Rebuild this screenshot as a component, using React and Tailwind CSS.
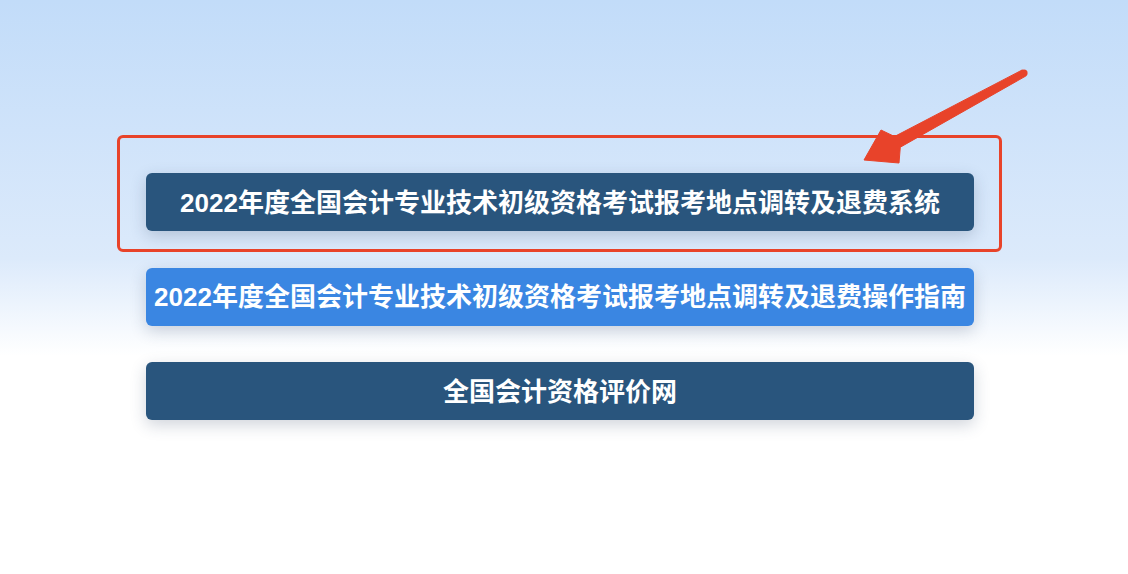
const links = [
  { label: "2022年度全国会计专业技术初级资格考试报考地点调转及退费系统", tone: "dark" },
  { label: "2022年度全国会计专业技术初级资格考试报考地点调转及退费操作指南", tone: "light" },
  { label: "全国会计资格评价网", tone: "dark" },
];

function Arrow() {
  return (
    <svg
      className="absolute left-[850px] top-[60px]"
      width="190"
      height="115"
      viewBox="0 0 190 115"
    >
      <polygon
        points="14,100 31,70 44.5,76.5 172.3,9.9 175.7,16.1 50.3,87.2 49,103"
        fill="#e8432a"
        stroke="#e8432a"
        strokeWidth="1"
        strokeLinejoin="round"
      />
      <circle cx="174" cy="13" r="3.6" fill="#e8432a" />
    </svg>
  );
}

export default function App() {
  return (
    <div
      className="relative w-full h-[574px] overflow-hidden bg-gradient-to-b from-[#c2dcf9] via-[#dceafb] via-45% to-white to-62%"
      style={{ fontFamily: '"Liberation Sans", "Noto Sans CJK SC", sans-serif' }}
    >
      <div className="flex flex-col gap-[36.5px] pt-[173px] ml-[146px] w-[828px]">
        {links.map((item) => (
          <a
            key={item.label}
            href="#"
            className={`flex items-center justify-center h-[58px] pt-[2px] rounded-[6px] text-white font-bold text-[26px] whitespace-nowrap shadow-[0_5px_16px_rgba(40,60,90,0.22)] ${
              item.tone === "dark" ? "bg-[#29557d]" : "bg-[#3a86e2]"
            }`}
          >
            {item.label}
          </a>
        ))}
      </div>

      {/* highlight around the first link */}
      <div className="absolute left-[117px] top-[135px] w-[885px] h-[117px] rounded-[6px] border-[3px] border-[#e8432a]" />
      <Arrow />
    </div>
  );
}
